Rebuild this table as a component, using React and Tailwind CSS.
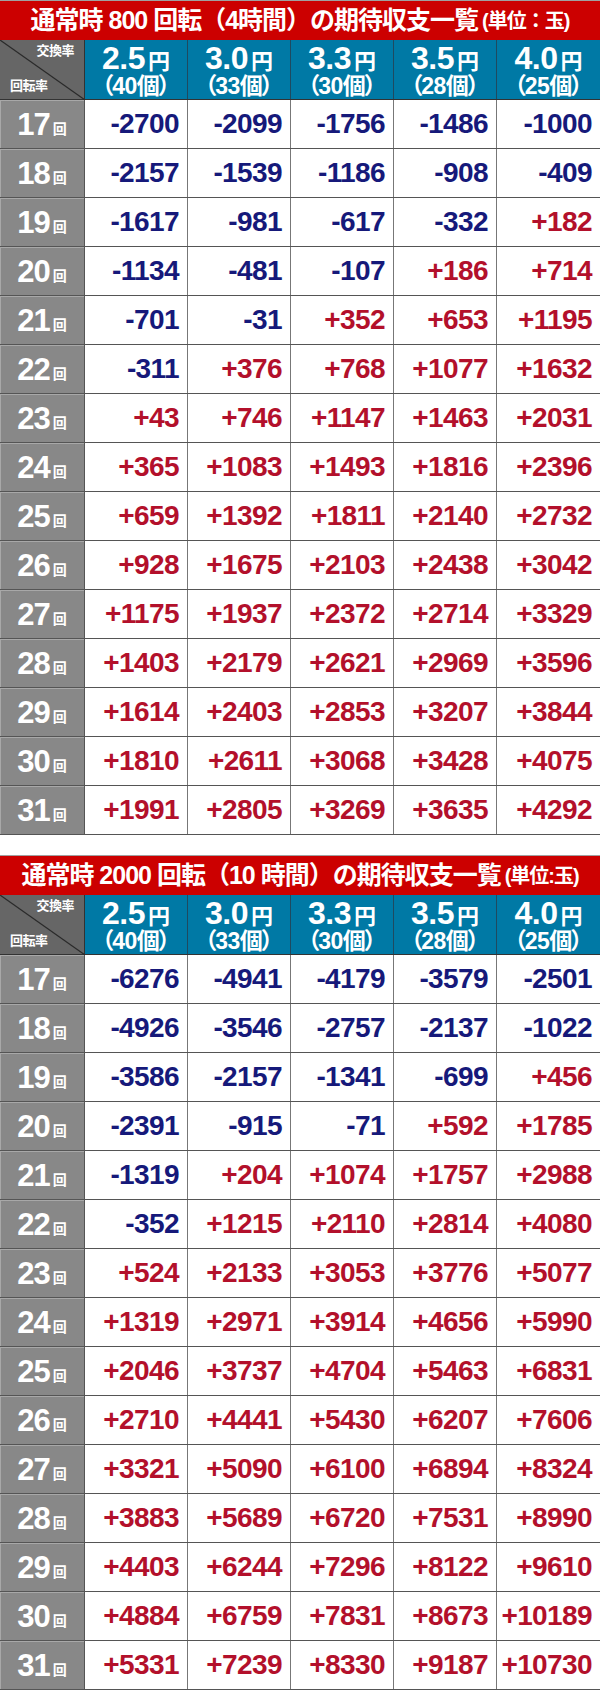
import React from "react";

const rates = [
  ["2.5", "40"],
  ["3.0", "33"],
  ["3.3", "30"],
  ["3.5", "28"],
  ["4.0", "25"],
];

const t1 = [
  [17, [-2700, -2099, -1756, -1486, -1000]],
  [18, [-2157, -1539, -1186, -908, -409]],
  [19, [-1617, -981, -617, -332, 182]],
  [20, [-1134, -481, -107, 186, 714]],
  [21, [-701, -31, 352, 653, 1195]],
  [22, [-311, 376, 768, 1077, 1632]],
  [23, [43, 746, 1147, 1463, 2031]],
  [24, [365, 1083, 1493, 1816, 2396]],
  [25, [659, 1392, 1811, 2140, 2732]],
  [26, [928, 1675, 2103, 2438, 3042]],
  [27, [1175, 1937, 2372, 2714, 3329]],
  [28, [1403, 2179, 2621, 2969, 3596]],
  [29, [1614, 2403, 2853, 3207, 3844]],
  [30, [1810, 2611, 3068, 3428, 4075]],
  [31, [1991, 2805, 3269, 3635, 4292]],
];

const t2 = [
  [17, [-6276, -4941, -4179, -3579, -2501]],
  [18, [-4926, -3546, -2757, -2137, -1022]],
  [19, [-3586, -2157, -1341, -699, 456]],
  [20, [-2391, -915, -71, 592, 1785]],
  [21, [-1319, 204, 1074, 1757, 2988]],
  [22, [-352, 1215, 2110, 2814, 4080]],
  [23, [524, 2133, 3053, 3776, 5077]],
  [24, [1319, 2971, 3914, 4656, 5990]],
  [25, [2046, 3737, 4704, 5463, 6831]],
  [26, [2710, 4441, 5430, 6207, 7606]],
  [27, [3321, 5090, 6100, 6894, 8324]],
  [28, [3883, 5689, 6720, 7531, 8990]],
  [29, [4403, 6244, 7296, 8122, 9610]],
  [30, [4884, 6759, 7831, 8673, 10189]],
  [31, [5331, 7239, 8330, 9187, 10730]],
];

const LAT = { fontFamily: '"Liberation Sans", Arial, sans-serif' };
const JP = { fontFamily: '"Liberation Sans", "Noto Sans CJK JP", sans-serif' };

function Title({ children }) {
  return (
    <div
      className="h-[40px] bg-[#cc0000] border-t border-[#a0a0a0] flex items-center justify-center text-white font-bold whitespace-nowrap"
      style={JP}
    >
      {children}
    </div>
  );
}

function Header() {
  return (
    <div className="grid grid-cols-[85px_repeat(5,1fr)] h-[60px] border-b border-[#333]">
      <div className="relative bg-[#666666] border-r border-[#333] text-white font-bold" style={JP}>
        <svg className="absolute inset-0" width="85" height="60" viewBox="0 0 85 60">
          <line x1="0" y1="0" x2="85" y2="60" stroke="#2a2a2a" strokeWidth="1.2" />
        </svg>
        <div className="absolute right-[10px] top-[4px] text-[13px] leading-none tracking-[-0.5px]">交換率</div>
        <div className="absolute left-[10px] bottom-[7px] text-[13px] leading-none tracking-[-0.5px]">回転率</div>
      </div>
      {rates.map(([r, c], i) => (
        <div
          key={i}
          className={`bg-[#0079a5] flex flex-col items-center justify-center text-white font-bold ${i < 4 ? "border-r border-[#1f4a60]" : ""}`}
        >
          <div className="flex items-baseline leading-none">
            <span className="text-[32px] tracking-[-0.5px]" style={LAT}>{r}</span>
            <span className="text-[22px] ml-[3px]" style={JP}>円</span>
          </div>
          <div className="flex items-center text-[23px] leading-none mt-[1px]" style={JP}>
            <span className="-mr-[2px]">（</span>
            <span className="tracking-[-0.5px]">{c}</span>
            <span>個</span>
            <span className="-ml-[2px]">）</span>
          </div>
        </div>
      ))}
    </div>
  );
}

function fmt(v) {
  return v > 0 ? `+${v}` : `${v}`;
}

function Rows({ data }) {
  return (
    <div>
      {data.map(([n, vals]) => (
        <div key={n} className="grid grid-cols-[85px_repeat(5,1fr)] h-[49px] border-b border-[#555]">
          <div className="bg-[#888888] border-r border-[#555] shadow-[inset_1px_1px_0_#a8a8a8] flex items-center justify-center text-white font-bold">
            <span className="text-[31px] leading-none tracking-[-1px]" style={LAT}>{n}</span>
            <span className="text-[14px] leading-none ml-[3px] mt-[10px]" style={JP}>回</span>
          </div>
          {vals.map((v, i) => (
            <div
              key={i}
              className={`bg-white flex items-center justify-end pr-[8px] font-bold text-[28px] tracking-[-0.6px] leading-none ${i < 4 ? "border-r border-[#777]" : ""} ${v > 0 ? "text-[#b3102b]" : "text-[#16197a]"}`}
              style={LAT}
            >
              {fmt(v)}
            </div>
          ))}
        </div>
      ))}
    </div>
  );
}

export default function App() {
  return (
    <div className="w-[600px] h-[1703px] bg-white">
      <Title>
        <span className="text-[25px] tracking-[-1px]">通常時 800 回転（4時間）の期待収支一覧</span>
        <span className="text-[20px] ml-[4px] tracking-[-1px]">(単位：玉)</span>
      </Title>
      <Header />
      <Rows data={t1} />
      <div className="h-[20px]" />
      <Title>
        <span className="text-[25px] tracking-[-1px]">通常時 2000 回転（10 時間）の期待収支一覧</span>
        <span className="text-[20px] ml-[4px] tracking-[-1px]">(単位:玉)</span>
      </Title>
      <Header />
      <Rows data={t2} />
    </div>
  );
}
